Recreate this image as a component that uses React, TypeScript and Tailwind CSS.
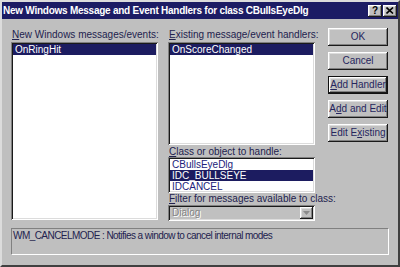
const sunken =
  "shadow-[inset_1px_1px_0_#808080,inset_-1px_-1px_0_#ffffff,inset_2px_2px_0_#1a1a1a,inset_-2px_-2px_0_#dcdcdc]";
const raised =
  "shadow-[inset_-1px_-1px_0_#1a1a1a,inset_1px_1px_0_#ffffff,inset_-2px_-2px_0_#808080,inset_2px_2px_0_#dcdcdc]";

function Btn({ children, isDefault }: { children: React.ReactNode; isDefault?: boolean }) {
  return (
    <div className={isDefault ? "h-[18px] w-[60px] border border-[#111]" : "h-[18px] w-[60px]"}>
      <div className={`flex h-full w-full items-center justify-center bg-[#c0c0c0] ${raised}`}>
        <span className="whitespace-nowrap text-[10px] leading-none text-[#26265e]">{children}</span>
      </div>
    </div>
  );
}

function Row({ text, selected }: { text: string; selected?: boolean }) {
  return (
    <div
      className={`h-[11px] whitespace-nowrap pl-[2px] text-[10px] leading-[11px] ${
        selected ? "bg-[#1c1c60] text-white" : "text-[#22227a]"
      }`}
    >
      {text}
    </div>
  );
}

const label = "whitespace-nowrap text-[10px] text-[#22224e]";

export default function App() {
  return (
    <div
      className="h-[267px] w-[400px] overflow-hidden border-2 border-t-[#dcdcdc] border-l-[#dcdcdc] border-r-[#404040] border-b-[#404040] bg-[#bfbfbf]"
      style={{ fontFamily: '"Liberation Sans", Arial, sans-serif' }}
    >
      {/* title bar */}
      <div className="flex h-[17px] items-center bg-[#1c1c64] pl-[1px] pr-[1px]">
        <span className="whitespace-nowrap text-[10px] font-bold leading-none tracking-[-0.25px] text-white">
          New Windows Message and Event Handlers for class CBullsEyeDlg
        </span>
        <div className="ml-auto flex gap-[1px]">
          <div className={`flex h-[12px] w-[14px] items-center justify-center bg-[#c0c0c0] text-[10px] font-bold leading-none text-black ${raised}`}>
            ?
          </div>
          <div className={`flex h-[12px] w-[14px] items-center justify-center bg-[#c0c0c0] ${raised}`}>
            <svg width="8" height="7" viewBox="0 0 8 7">
              <path d="M0.5 0.5 L7 6.5 M7 0.5 L0.5 6.5" stroke="#000" strokeWidth="1.6" />
            </svg>
          </div>
        </div>
      </div>

      <div className="flex pl-[9px] pr-[10px] pt-[9px]">
        {/* left column */}
        <div className="flex w-[147px] flex-col">
          <div className={`h-[14px] pl-[1px] leading-[13px] ${label}`}>
            <u>N</u>ew Windows messages/events:
          </div>
          <div className={`h-[178px] bg-white p-[2px] ${sunken}`}>
            <Row text="OnRingHit" selected />
          </div>
        </div>

        {/* middle column */}
        <div className="ml-[10px] flex w-[147px] flex-col">
          <div className={`h-[14px] pl-[1px] leading-[13px] ${label}`}>
            <u>E</u>xisting message/event handlers:
          </div>
          <div className={`h-[103px] bg-white p-[2px] ${sunken}`}>
            <Row text="OnScoreChanged" selected />
          </div>
          <div className={`h-[12px] pl-[1px] pt-[1px] leading-[11px] ${label}`}>
            <u>C</u>lass or object to handle:
          </div>
          <div className={`h-[36px] bg-white p-[2px] ${sunken}`}>
            <Row text="CBullsEyeDlg" />
            <Row text="IDC_BULLSEYE" selected />
            <Row text="IDCANCEL" />
          </div>
          <div className={`h-[12px] pl-[1px] leading-[11px] ${label}`}>
            <u>F</u>ilter for messages available to class:
          </div>
          <div className={`flex h-[16px] items-center bg-[#c0c0c0] p-[2px] ${sunken}`}>
            <span className="pl-[2px] text-[10px] leading-none text-[#848484] [text-shadow:1px_1px_0_#fff]">Dialog</span>
            <div className={`ml-auto flex h-[12px] w-[13px] items-center justify-center bg-[#c0c0c0] ${raised}`}>
              <svg width="7" height="4" viewBox="0 0 7 4">
                <path d="M0 0 H7 L3.5 4 Z" fill="#8a8a8a" />
              </svg>
            </div>
          </div>
        </div>

        {/* buttons */}
        <div className="ml-auto flex flex-col gap-[6px]">
          <Btn>OK</Btn>
          <Btn>Cancel</Btn>
          <Btn isDefault>
            <u>A</u>dd Handler
          </Btn>
          <Btn>
            A<u>d</u>d and Edit
          </Btn>
          <Btn>
            Edit E<u>x</u>isting
          </Btn>
        </div>
      </div>

      {/* status */}
      <div className="pl-[9px] pr-[9px] pt-[7px]">
        <div className="h-[27px] whitespace-nowrap border border-t-[#808080] border-l-[#808080] border-r-[#ffffff] border-b-[#ffffff] px-[1px] pt-[1px] text-[10px] leading-[12px] tracking-[-0.55px] text-[#22224e]">
          WM_CANCELMODE : Notifies a window to cancel internal modes
        </div>
      </div>
    </div>
  );
}
